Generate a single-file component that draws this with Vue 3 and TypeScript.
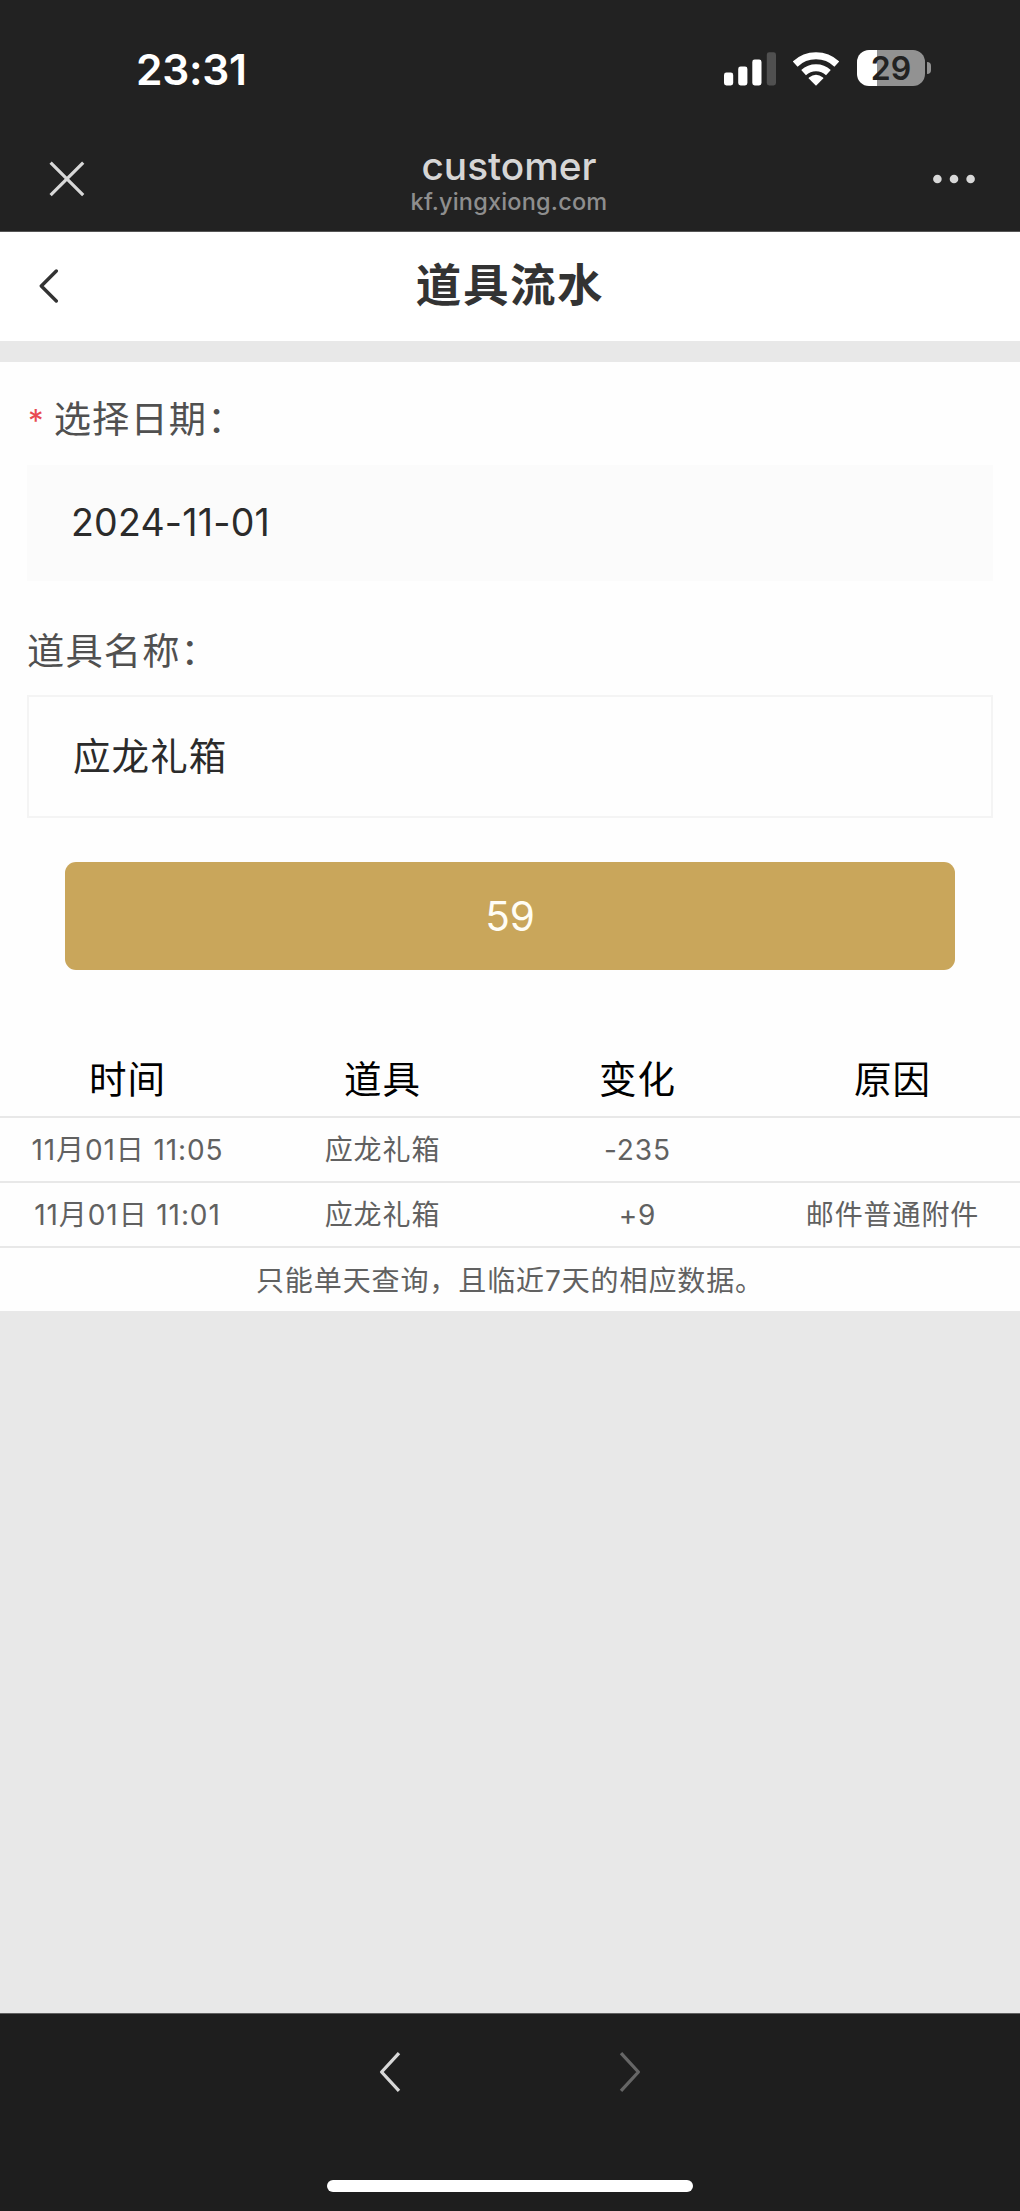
<script setup lang="ts">
interface FlowRecord {
  time: string
  item: string
  change: string
  reason: string
}

const columns: string[] = ['时间', '道具', '变化', '原因']

const records: FlowRecord[] = [
  { time: '11月01日 11:05', item: '应龙礼箱', change: '-235', reason: '' },
  { time: '11月01日 11:01', item: '应龙礼箱', change: '+9', reason: '邮件普通附件' },
]
</script>

<template>
  <div class="screen">
    <header class="chrome">
      <div class="status">
        <span class="clock">23:31</span>
        <div class="indicators">
          <svg class="signal" width="52" height="34" viewBox="0 0 52 34">
            <rect x="0" y="20.5" width="9.2" height="13" rx="2.4" fill="#fff" />
            <rect x="14.2" y="14.5" width="9.2" height="19" rx="2.4" fill="#fff" />
            <rect x="28.3" y="7.5" width="9.2" height="26" rx="2.4" fill="#fff" />
            <rect x="42.8" y="0.3" width="9.2" height="33.2" rx="2.4" fill="#505050" />
          </svg>
          <svg class="wifi" width="46" height="34" viewBox="0 0 46 34">
            <path d="M2.2 12.3A30.3 30.3 0 0 1 43.8 12.3" transform="translate(0 -.2)" fill="none" stroke="#fff" stroke-width="7" />
            <path d="M10.6 20.6A18.3 18.3 0 0 1 35.4 20.6" fill="none" stroke="#fff" stroke-width="7" />
            <path d="M23 33.8L15.8 26.6Q15.4 26 16 25.5Q23 20.2 30 25.5Q30.6 26 30.2 26.6Z" fill="#fff" />
          </svg>
          <div class="battery">
            <div class="cell"><span>29</span></div>
            <i class="nub"></i>
          </div>
        </div>
      </div>
      <div class="nav">
        <svg width="36" height="36" viewBox="0 0 36 36">
          <path d="M1.6 1.6L34.2 34.2M34.2 1.6L1.6 34.2" fill="none" stroke="#d8d8d8" stroke-width="3.2" />
        </svg>
        <div class="site">
          <div class="site-name">customer</div>
          <div class="site-host">kf.yingxiong.com</div>
        </div>
        <svg width="42" height="10" viewBox="0 0 42 10">
          <circle cx="4.4" cy="5" r="4.3" fill="#d8d8d8" />
          <circle cx="21" cy="5" r="4.3" fill="#d8d8d8" />
          <circle cx="37.6" cy="5" r="4.3" fill="#d8d8d8" />
        </svg>
      </div>
    </header>

    <div class="title-bar">
      <svg width="20" height="34" viewBox="0 0 20 34">
        <path d="M17.3 2L2.3 17L17.3 32" fill="none" stroke="#333" stroke-width="3.4" stroke-linecap="round" stroke-linejoin="round" />
      </svg>
      <h1>道具流水</h1>
    </div>

    <main class="content">
      <label class="label first"><b>*</b>选择日期：</label>
      <div class="field date">2024-11-01</div>
      <label class="label second">道具名称：</label>
      <div class="field name">应龙礼箱</div>
      <button class="submit" type="button">59</button>

      <div class="table">
        <div class="row head">
          <span v-for="c in columns" :key="c">{{ c }}</span>
        </div>
        <div v-for="r in records" :key="r.time" class="row">
          <span>{{ r.time }}</span>
          <span>{{ r.item }}</span>
          <span>{{ r.change }}</span>
          <span>{{ r.reason }}</span>
        </div>
        <p class="note">只能单天查询，且临近7天的相应数据。</p>
      </div>
    </main>

    <footer class="toolbar">
      <div class="arrows">
        <svg width="22" height="42" viewBox="0 0 22 42">
          <path d="M20 2.2L2.6 21L20 39.8" fill="none" stroke="#d8d8d8" stroke-width="3.3" stroke-linejoin="round" />
        </svg>
        <svg width="22" height="42" viewBox="0 0 22 42">
          <path d="M2 2.2L19.4 21L2 39.8" fill="none" stroke="#666" stroke-width="3.3" stroke-linejoin="round" />
        </svg>
      </div>
      <div class="home"></div>
    </footer>
  </div>
</template>

<style>
body {
  margin: 0;
  background: #e8e8e8;
}
</style>

<style scoped>
.screen {
  display: flex;
  flex-direction: column;
  width: 1020px;
  height: 2211px;
  overflow: hidden;
  background: #e8e8e8;
  font-family: Inter, "Noto Sans CJK SC", sans-serif;
}
.screen * {
  box-sizing: border-box;
}
svg {
  display: block;
  flex: none;
}
.chrome {
  flex: none;
  height: 232px;
  background: #222;
  border-bottom: 1px solid #555;
}
.status {
  display: flex;
  align-items: flex-start;
  justify-content: space-between;
  height: 138px;
  padding: 44px 89px 0 136px;
}
.clock {
  color: #fff;
  font-size: 42.5px;
  font-weight: 600;
  line-height: 52px;
  letter-spacing: -0.3px;
}
.indicators {
  display: flex;
  align-items: center;
  height: 36px;
  margin-top: 6px;
}
.signal,
.wifi {
  margin-top: 1px;
}
.wifi {
  margin-right: 18px;
  margin-left: 17px;
}
.battery {
  display: flex;
  align-items: center;
  gap: 2px;
}
.cell {
  width: 68px;
  height: 36px;
  border-radius: 12px;
  background: linear-gradient(90deg, #fff 20px, #929292 20px);
  color: #222;
  font-size: 32px;
  font-weight: 600;
  line-height: 37px;
  text-align: center;
}
.nub {
  width: 4px;
  height: 12px;
  border-radius: 0 6px 6px 0;
  background: #929292;
}
.nav {
  display: flex;
  justify-content: space-between;
  align-items: center;
  height: 82px;
  padding: 0 45px 0 49px;
}
.site {
  padding-top: 2px;
  text-align: center;
}
.site-name {
  color: #d6d6d6;
  font-size: 38.8px;
  font-weight: 500;
  line-height: 44px;
}
.site-host {
  color: #8e8e8e;
  font-size: 23.5px;
  font-weight: 500;
  line-height: 28px;
  letter-spacing: 0.2px;
}
.title-bar {
  display: grid;
  grid-template-columns: 200px 1fr 200px;
  align-items: center;
  flex: none;
  height: 109px;
  padding-bottom: 2px;
  background: #fff;
}
.title-bar svg {
  margin-left: 39px;
}
.title-bar h1 {
  margin: 0;
  color: #333;
  font-size: 45.5px;
  font-weight: 700;
  line-height: 60px;
  letter-spacing: 1.6px;
  text-align: center;
}
.content {
  flex: none;
  height: 949px;
  margin-top: 21px;
  padding-top: 33px;
  background: #fefefe;
}
.label {
  display: block;
  height: 50px;
  padding-left: 27px;
  color: #505050;
  font-size: 37.3px;
  line-height: 50px;
  letter-spacing: 1.1px;
}
.label b {
  position: relative;
  top: -1px;
  margin-right: 9px;
  margin-left: 1px;
  color: #e84b50;
  font-size: 31px;
  font-weight: 400;
}
.field {
  margin: 0 27px;
  padding-left: 44px;
  color: #2b2b2b;
  font-size: 37.5px;
}
.date {
  height: 116px;
  margin-top: 20px;
  background: #fbfbfb;
  line-height: 116px;
  letter-spacing: 0.2px;
}
.second {
  margin-top: 46px;
}
.name {
  height: 123px;
  margin-top: 18px;
  border: 2px solid #f4f4f4;
  line-height: 119px;
  letter-spacing: 1.1px;
}
.submit {
  display: block;
  width: 890px;
  height: 108px;
  margin: 44px 65px 0;
  padding: 0;
  border: 0;
  border-radius: 11px;
  background: #c9a65b;
  color: #fffdf5;
  font: 400 40.5px/109px Inter, sans-serif;
  text-align: center;
}
.table {
  margin-top: 71px;
  color: #616161;
  font-size: 28px;
  letter-spacing: 0.9px;
}
.row {
  display: grid;
  grid-template-columns: repeat(4, 1fr);
  height: 65px;
  border-bottom: 2px solid #e8e8e8;
  line-height: 65px;
  text-align: center;
  white-space: nowrap;
}
.head {
  height: 77px;
  color: #000;
  font-size: 37.5px;
  line-height: 77px;
}
.note {
  margin: 0;
  line-height: 67px;
  text-align: center;
}
.toolbar {
  display: flex;
  flex-direction: column;
  align-items: center;
  justify-content: space-between;
  height: 198px;
  margin-top: auto;
  padding: 37px 0 19px;
  border-top: 1px solid #606060;
  background: #1e1e1e;
}
.arrows {
  display: flex;
  gap: 218px;
}
.home {
  width: 366px;
  height: 12px;
  border-radius: 6px;
  background: #fff;
}
</style>
